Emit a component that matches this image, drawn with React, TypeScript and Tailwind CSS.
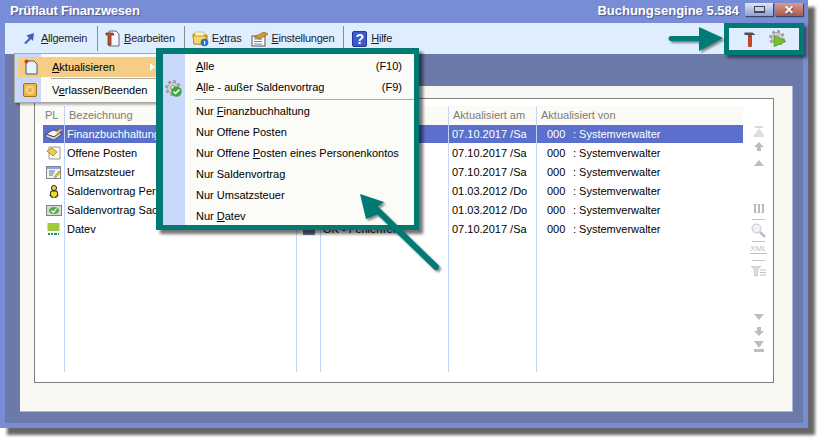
import type { ReactNode } from 'react'

const rows = [
  { name: 'Finanzbuchhaltung', date: '07.10.2017 /Sa' },
  { name: 'Offene Posten', date: '07.10.2017 /Sa' },
  { name: 'Umsatzsteuer', date: '07.10.2017 /Sa' },
  { name: 'Saldenvortrag Pers', date: '01.03.2012 /Do' },
  { name: 'Saldenvortrag Sac', date: '01.03.2012 /Do' },
  { name: 'Datev', date: '07.10.2017 /Sa' }
]

function Gear({ size = 18 }: { size?: number }) {
  return (
    <svg width={size} height={size} viewBox="0 0 18 18">
      <circle cx="8" cy="8" r="6.6" fill="none" stroke="#9a9a9a" strokeWidth="2.600" strokeDasharray="2.600 2.600" />
      <circle cx="8" cy="8" r="5.400" fill="#d6d6d6" stroke="#a0a0a0" strokeWidth="1" />
      <circle cx="8" cy="8" r="2.400" fill="#f4f4f4" stroke="#8a8a8a" strokeWidth="1" />
    </svg>
  )
}

function GearCheck() {
  return (
    <div className="relative h-[18px] w-[18px]">
      <Gear />
      <svg className="absolute left-[6px] top-[6px]" width="11" height="11" viewBox="0 0 11 11">
        <circle cx="5.500" cy="5.500" r="5.200" fill="#3fa63c" />
        <path d="M2.500 5.500l2 2 4-4" fill="none" stroke="#fff" strokeWidth="1.500" />
      </svg>
    </div>
  )
}

function GearPlay() {
  return (
    <div className="relative h-[18px] w-[18px]">
      <Gear />
      <svg className="absolute left-[4px] top-[5px]" width="14" height="12" viewBox="0 0 14 12">
        <path d="M1 0.500l12 6-12 5z" fill="#7cc02e" stroke="#4d8f1c" strokeWidth="0.700" />
      </svg>
    </div>
  )
}

function Hammer() {
  return (
    <svg width="12" height="15" viewBox="0 0 12 15">
      <path d="M0.500 0.500h8l3 2.500H7.500v1h-3v-1h-4z" fill="#55504c" />
      <rect x="4.500" y="4" width="3" height="10.500" fill="#d9421c" stroke="#7d1c08" strokeWidth="0.600" />
    </svg>
  )
}

function DocHammer() {
  return (
    <svg width="15" height="17" viewBox="0 0 15 17">
      <path d="M4 1h7l3 3v12H4z" fill="#f4f7fc" stroke="#5a6a88" />
      <path d="M1 3h7l1 2H6v10H3V5H1z" fill="#c2552e" stroke="#5c2a14" strokeWidth="0.700" />
    </svg>
  )
}

function Folder() {
  return (
    <svg width="17" height="17" viewBox="0 0 17 17">
      <path d="M1 4h5l1 1h8v9H2z" fill="#f1cb52" stroke="#a98422" />
      <path d="M3 2h9v8H3z" fill="#fbf4c6" stroke="#c0a850" strokeWidth="0.600" />
      <path d="M1 6h13l-1 8H2z" fill="#f6d968" stroke="#a98422" strokeWidth="0.700" />
      <circle cx="12.500" cy="12.500" r="3.800" fill="#2a6fcf" />
      <rect x="12" y="11" width="1.200" height="3.600" fill="#fff" />
    </svg>
  )
}

function Settings() {
  return (
    <svg width="18" height="16" viewBox="0 0 18 16">
      <rect x="1" y="5" width="13" height="10" fill="#fff" stroke="#555" />
      <path d="M3 8h8M3 10.500h8M3 13h8" stroke="#6c7fb0" />
      <path d="M3 6l10-5 4 2-8 5z" fill="#d89a2e" stroke="#7b5510" strokeWidth="0.600" />
    </svg>
  )
}

function Help() {
  return (
    <div className="flex h-[16px] w-[15px] items-center justify-center rounded-[2px] border border-[#23389c] bg-[#3f5ad0] text-[14px] font-bold text-white">
      ?
    </div>
  )
}

function RowIcon({ index }: { index: number }) {
  if (index === 0)
    return (
      <svg width="18" height="13" viewBox="0 0 18 13">
        <path d="M1 6l7-4 8 2-7 5z" fill="#f4f4f4" stroke="#3c3c50" strokeWidth="0.800" />
        <path d="M1 6v3l8 3 7-5V4l-7 5z" fill="#d7d7df" stroke="#3c3c50" strokeWidth="0.800" />
        <path d="M11 4l5-3 1 1-5 4z" fill="#f2c53a" />
      </svg>
    )
  if (index === 1)
    return (
      <svg width="15" height="14" viewBox="0 0 15 14">
        <path d="M3 1h11v12H3z" fill="#f6f6f2" stroke="#9a9a9a" />
        <path d="M1 5l5-3 5 4-4 4z" fill="#f1cf3c" stroke="#8a7320" strokeWidth="0.700" />
      </svg>
    )
  if (index === 2)
    return (
      <svg width="15" height="13" viewBox="0 0 15 13">
        <rect x="0.500" y="0.500" width="14" height="12" fill="#eef2fb" stroke="#7d8798" />
        <rect x="1" y="1" width="13" height="2" fill="#8da8dd" />
        <path d="M3 5h6M3 7h5M3 9h4" stroke="#66708a" />
        <path d="M8 11l5-6 1.500 1-5 6z" fill="#f0c030" stroke="#8a6d10" strokeWidth="0.500" />
      </svg>
    )
  if (index === 3)
    return (
      <svg width="10" height="13" viewBox="0 0 10 13">
        <circle cx="5" cy="3" r="2.500" fill="#f3dc1f" stroke="#222" />
        <path d="M2 6h6l1 5H7v2H3v-2H1z" fill="#f3dc1f" stroke="#222" />
      </svg>
    )
  if (index === 4)
    return (
      <svg width="16" height="11" viewBox="0 0 16 11">
        <rect x="0.500" y="0.500" width="15" height="10" fill="#d5d9de" stroke="#7d8488" />
        <ellipse cx="8" cy="5.500" rx="5" ry="3.500" fill="#53ad3b" />
        <path d="M5.500 5.500l2 2 3-4" fill="none" stroke="#fff" strokeWidth="1.200" />
      </svg>
    )
  return (
    <svg width="13" height="13" viewBox="0 0 13 13">
      <rect x="0.500" width="12" height="8" fill="#9ccc3c" />
      <path d="M1 11h2M4 11h2M7 11h3M11 11h1" stroke="#1f8f6f" strokeWidth="2" />
    </svg>
  )
}

function Column({ width, title, children, first }: { width: string; title: string; children?: ReactNode; first?: boolean }) {
  return (
    <div className={`flex shrink-0 flex-col ${width} ${first ? '' : 'border-l border-[#c5d3f7]'}`}>
      <div className={`h-[19px] truncate bg-[#fafaf6] pt-[4px] text-[#7c7c78] ${first ? 'pl-[10px]' : 'pl-[4px]'}`}>{title}</div>
      {children}
    </div>
  )
}

function Cell({ selected, className, children }: { selected: boolean; className?: string; children?: ReactNode }) {
  return (
    <div className={`mb-px flex h-[18px] items-center whitespace-nowrap ${selected ? 'bg-[#5a70cc] text-white' : 'text-black'} ${className ?? ''}`}>
      {children}
    </div>
  )
}

function ListTools() {
  const c = '#bdbdbd'
  return (
    <div className="flex w-[32px] flex-col items-center pr-[1px] pt-[27px]">
      <svg width="12" height="11" viewBox="0 0 12 11"><rect x="2" width="8" height="2" fill="#d8d8d8" /><path d="M6 2l5 7H1z" fill="#dedede" /><rect x="1" y="9" width="10" height="2" fill="#dedede" /></svg>
      <svg className="mt-[5px]" width="10" height="9" viewBox="0 0 10 9"><path d="M5 0l5 5H7v4H3V5H0z" fill={c} /></svg>
      <svg className="mt-[9px]" width="10" height="6" viewBox="0 0 10 6"><path d="M5 0l5 6H0z" fill={c} /></svg>
      <div className="mt-[37px] flex h-[10px] items-center gap-[1px]">
        <span className="h-[9px] w-[3px] border-y border-l-2 border-[#bbb]" />
        <span className="h-[9px] w-[2px] bg-[#bbb]" />
        <span className="h-[9px] w-[3px] border-y border-r-2 border-[#bbb]" />
      </div>
      <div className="mt-[6px] h-px w-[13px] bg-[#c4c4c4]" />
      <svg className="mt-[3px]" width="15" height="15" viewBox="0 0 15 15"><circle cx="5.500" cy="5.500" r="4.500" fill="#f0f0fc" stroke="#c6c6c6" /><path d="M9 9l5 5" stroke="#bdbdbd" strokeWidth="2.500" /></svg>
      <div className="mt-[3px] h-px w-[13px] bg-[#c4c4c4]" />
      <div className="mt-[2px] h-[10px] border-b border-[#c0c0c0] text-[8px] leading-[9px] text-[#bdbdbd]">XML</div>
      <div className="mt-[6px] h-px w-[13px] bg-[#c4c4c4]" />
      <svg className="mt-[5px]" width="15" height="11" viewBox="0 0 15 11"><path d="M0 0h10L6.500 4v6h-3V4z" fill="#dcdcdc" stroke="#c0c0c0" strokeWidth="0.600" /><path d="M9 4h6M9 6.500h6M9 9h6" stroke="#c0c0c0" /></svg>
      <svg className="mt-[37px]" width="10" height="6" viewBox="0 0 10 6"><path d="M0 0h10L5 6z" fill={c} /></svg>
      <svg className="mt-[7px]" width="10" height="9" viewBox="0 0 10 9"><path d="M3 0h4v4h3L5 9 0 4h3z" fill={c} /></svg>
      <svg className="mt-[5px]" width="12" height="11" viewBox="0 0 12 11"><path d="M1 0h10L6 7z" fill={c} /><rect x="1" y="8" width="10" height="3" fill={c} /></svg>
    </div>
  )
}

function ToolButton({ icon, children, className }: { icon: ReactNode; children: ReactNode; className?: string }) {
  return (
    <div className={`flex items-center ${className ?? ''}`}>
      {icon}
      <span className="tracking-[-0.25px]">{children}</span>
    </div>
  )
}

function MenuItem({ children, shortcut }: { children: ReactNode; shortcut?: string }) {
  return (
    <div className="flex h-[21px] items-center justify-between pl-[11px] pr-[12px] text-black">
      <span>{children}</span>
      {shortcut && <span>{shortcut}</span>}
    </div>
  )
}

export default function App() {
  return (
    <div className="relative h-[438px] w-[818px] overflow-hidden bg-white font-['Liberation_Sans',sans-serif] text-[11px] leading-none">
      {/* Window */}
      <div className="flex h-[428px] w-[808px] flex-col bg-[#788dd6] shadow-[7px_7px_3px_rgba(0,0,0,0.6)]">
        {/* Title bar */}
        <div className="flex h-[23px] shrink-0 items-center pl-[10px] pr-[5px] text-[13px] font-bold text-white [text-shadow:1px_1px_1px_rgba(40,50,110,0.6)]">
          <span className="mb-[3px] tracking-[-0.2px]">Prüflaut Finanzwesen</span>
          <span className="mb-[3px] ml-auto">Buchungsengine 5.584</span>
          <div className="mb-[4px] ml-[6px] flex h-[13px] w-[28px] items-center justify-center bg-gradient-to-b from-[#e0e6f0] to-[#8da0cc] shadow-[1px_1px_1px_rgba(0,0,0,0.5)]">
            <span className="h-[7px] w-[11px] border border-b-2 border-[#3f4660] bg-[#c9d3e4]" />
          </div>
          <div className="mb-[4px] ml-[2px] flex h-[13px] w-[28px] items-center justify-center bg-gradient-to-b from-[#d99c8e] to-[#a85a4c] text-[12px] text-white shadow-[1px_1px_1px_rgba(0,0,0,0.5)]">
            ✕
          </div>
        </div>

        <div className="flex flex-1 flex-col px-[5px] pb-[5px]">
          {/* Toolbar */}
          <div className="flex h-[31px] shrink-0 items-center bg-[#dfeeff] pl-[18px] text-[#1d1d2b]">
            <ToolButton
              className="gap-[7px]"
              icon={
                <svg width="11" height="11" viewBox="0 0 11 11">
                  <path d="M1 10l5-5-2.500-2.500L11 0l-1 8-2-2-5 5z" fill="#3c5fc0" />
                </svg>
              }
            >
              <u>A</u>llgemein
            </ToolButton>
            <div className="ml-[10px] h-[25px] w-px bg-[#8b8b8b]" />
            <ToolButton className="ml-[7px] gap-[4px]" icon={<DocHammer />}>
              <u>B</u>earbeiten
            </ToolButton>
            <div className="ml-[9px] h-[25px] w-px bg-[#8b8b8b]" />
            <ToolButton className="ml-[7px] gap-[3px]" icon={<Folder />}>
              E<u>x</u>tras
            </ToolButton>
            <ToolButton className="ml-[10px] gap-[2px]" icon={<Settings />}>
              <u>E</u>instellungen
            </ToolButton>
            <div className="ml-[9px] h-[25px] w-px bg-[#8b8b8b]" />
            <ToolButton className="ml-[8px] gap-[4px]" icon={<Help />}>
              <u>H</u>ilfe
            </ToolButton>
          </div>

          {/* Content */}
          <div className="flex flex-1 flex-col bg-[#6b7aa9] pb-[11px] pl-[15px] pr-[10px] pt-[32px]">
            <div className="flex flex-1 flex-col border-b border-r border-[#a9bad6] bg-[#f8f7f1] pb-[28px] pl-[14px] pr-[18px] pt-[12px]">
              {/* List */}
              <div className="flex flex-1 border border-[#808080] bg-white pt-[7px]">
                <div className="flex h-[266px] shrink-0">
                  <Column first width="w-[29px]" title="PL">
                    {rows.map((row, i) => (
                      <Cell key={row.name} selected={i === 0} className="ml-[8px] justify-center">
                        <RowIcon index={i} />
                      </Cell>
                    ))}
                  </Column>
                  <Column width="w-[232px]" title="Bezeichnung">
                    {rows.map((row, i) => (
                      <Cell key={row.name} selected={i === 0} className="pl-[2px]">
                        {row.name}
                      </Cell>
                    ))}
                  </Column>
                  <Column width="w-[24px]" title="">
                    {rows.map((row, i) => (
                      <Cell key={row.name} selected={i === 0} className="justify-center">
                        <span className="h-[12px] w-[12px] bg-[#6c7394]" />
                      </Cell>
                    ))}
                  </Column>
                  <Column width="w-[128px]" title="">
                    {rows.map((row, i) => (
                      <Cell key={row.name} selected={i === 0} className="pl-[2px]">
                        {i === 5 && 'OK - Fehlerfrei'}
                      </Cell>
                    ))}
                  </Column>
                  <Column width="w-[88px]" title="Aktualisiert am">
                    {rows.map((row, i) => (
                      <Cell key={row.name} selected={i === 0} className="pl-[3px]">
                        {row.date}
                      </Cell>
                    ))}
                  </Column>
                  <Column width="w-[207px]" title="Aktualisiert von">
                    {rows.map((row, i) => (
                      <Cell key={row.name} selected={i === 0} className="pl-[10px]">
                        <span className="w-[26px]">000</span>: Systemverwalter
                      </Cell>
                    ))}
                  </Column>
                </div>
                <div className="-mt-[7px]">
                  <ListTools />
                </div>
              </div>
            </div>
          </div>
        </div>
      </div>

      {/* Allgemein menu */}
      <div className="absolute left-[14px] top-[53px] h-[50px] w-[150px] border border-[#a8a8a8] bg-[#fbfbf8] shadow-[2px_2px_2px_rgba(0,0,0,0.3)]">
        <div className="flex h-full">
          <div className="w-[26px] shrink-0 bg-[#c9d9fb]" />
          <div className="flex-1" />
        </div>
        <div className="absolute inset-x-[3px] top-[3px] flex h-[20px] items-center bg-[#f5cd84] pl-[5px]">
          <svg width="16" height="16" viewBox="0 0 16 16">
            <path d="M3 2h8l3 3v10H3z" fill="#eaf2fb" stroke="#45587d" />
            <circle cx="3.500" cy="2.500" r="2" fill="#d9392a" />
          </svg>
          <span className="ml-[13px]">
            <u>A</u>ktualisieren
          </span>
          <span className="ml-[35px] h-0 w-0 border-y-[4px] border-l-[5px] border-y-transparent border-l-white" />
        </div>
        <div className="absolute left-[36px] right-0 top-[24px] h-px bg-[#a9a9a9]" />
        <div className="absolute inset-x-[3px] top-[26px] flex h-[20px] items-center pl-[5px]">
          <div className="flex h-[14px] w-[14px] items-center justify-center rounded-[2px] border border-[#a9731a] bg-[#eeb64a]">
            <span className="h-[8px] w-[8px] rounded-full border border-[#fbf3d0]" />
          </div>
          <span className="ml-[15px]">
            V<u>e</u>rlassen/Beenden
          </span>
        </div>
      </div>

      {/* Aktualisieren submenu, framed */}
      <div className="absolute left-[156px] top-[48px] flex h-[182px] w-[263px] border-b-[5px] border-l-[7px] border-r-[5px] border-t-[6px] border-[#007a73] bg-[#fbfbf8] shadow-[4px_4px_3px_rgba(0,0,0,0.55)]">
        <div className="flex w-[22px] shrink-0 justify-center bg-[#c9d9fb] pt-[26px]">
          <GearCheck />
        </div>
        <div className="flex-1 pt-[2px]">
          <MenuItem shortcut="(F10)">
            <u>A</u>lle
          </MenuItem>
          <MenuItem shortcut="(F9)">
            A<u>l</u>le - außer Saldenvortrag
          </MenuItem>
          <div className="ml-[10px] mt-[1px] h-[2px] border-b border-white bg-[#a8a8a8]" />
          <MenuItem>
            Nur <u>F</u>inanzbuchhaltung
          </MenuItem>
          <MenuItem>Nur Offene Posten</MenuItem>
          <MenuItem>
            Nur Offene <u>P</u>osten eines Personenkontos
          </MenuItem>
          <MenuItem>Nur Saldenvortrag</MenuItem>
          <MenuItem>Nur Umsatzsteuer</MenuItem>
          <MenuItem>
            Nur <u>D</u>atev
          </MenuItem>
        </div>
      </div>

      {/* Frame round the toolbar buttons */}
      <div className="absolute left-[724px] top-[23px] flex h-[32px] w-[80px] items-center border-[5px] border-[#007a73] bg-[#dfeeff] pl-[15px] shadow-[3px_3px_3px_rgba(0,0,0,0.5)]">
        <Hammer />
        <div className="ml-[13px]">
          <GearPlay />
        </div>
      </div>

      {/* Arrows */}
      <svg className="absolute left-[660px] top-[20px] drop-shadow-[2px_2px_1px_rgba(0,0,0,0.45)]" width="70" height="40" viewBox="0 0 70 40">
        <path d="M11 16h28V7l24 11-24 13V21H11z" fill="#007a73" />
        <path d="M11 18.500h30" stroke="#007a73" strokeWidth="5" strokeLinecap="round" />
      </svg>
      <svg className="absolute left-[350px] top-[185px] drop-shadow-[2px_2px_1px_rgba(0,0,0,0.45)]" width="100" height="95" viewBox="0 0 100 95">
        <path d="M10 9l24 8-7 5 6 5-17 7z" fill="#007a73" />
        <path d="M24 22l62 60" stroke="#007a73" strokeWidth="6" strokeLinecap="round" />
      </svg>
    </div>
  )
}
